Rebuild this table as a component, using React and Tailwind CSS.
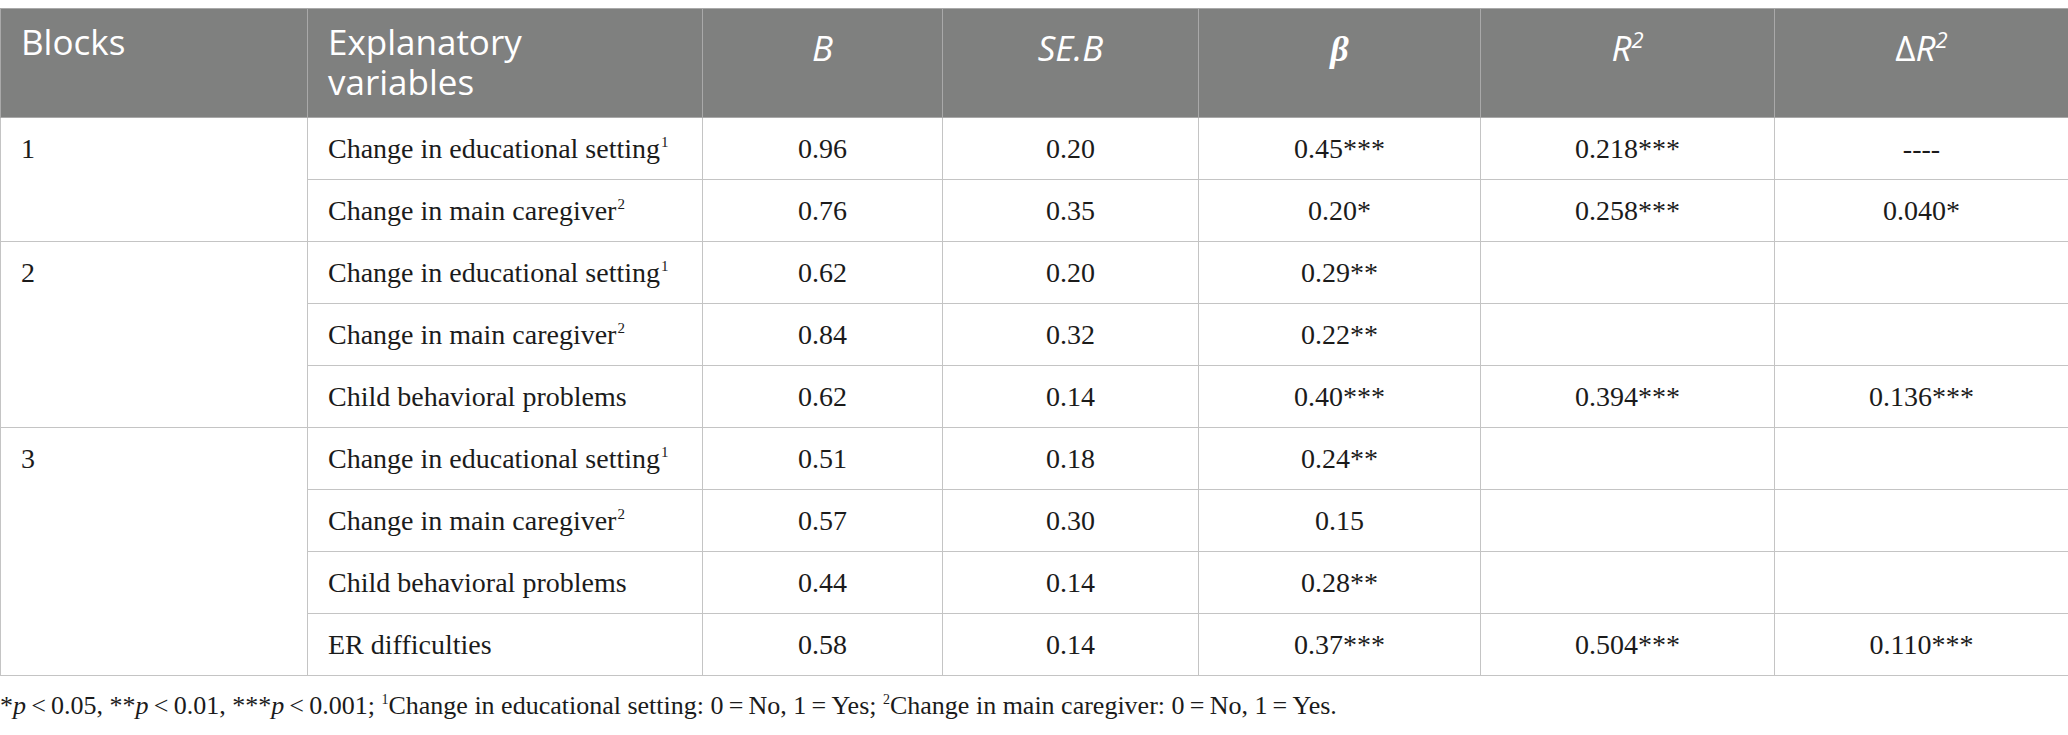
import React from 'react';

const rows = [
    { block: '1', span: 2, label: 'Change in educational setting', sup: '1', b: '0.96', se: '0.20', beta: '0.45***', r2: '0.218***', dr2: '----' },
    { label: 'Change in main caregiver', sup: '2', b: '0.76', se: '0.35', beta: '0.20*', r2: '0.258***', dr2: '0.040*' },
    { block: '2', span: 3, label: 'Change in educational setting', sup: '1', b: '0.62', se: '0.20', beta: '0.29**', r2: '', dr2: '' },
    { label: 'Change in main caregiver', sup: '2', b: '0.84', se: '0.32', beta: '0.22**', r2: '', dr2: '' },
    { label: 'Child behavioral problems', b: '0.62', se: '0.14', beta: '0.40***', r2: '0.394***', dr2: '0.136***' },
    { block: '3', span: 4, label: 'Change in educational setting', sup: '1', b: '0.51', se: '0.18', beta: '0.24**', r2: '', dr2: '' },
    { label: 'Change in main caregiver', sup: '2', b: '0.57', se: '0.30', beta: '0.15', r2: '', dr2: '' },
    { label: 'Child behavioral problems', b: '0.44', se: '0.14', beta: '0.28**', r2: '', dr2: '' },
    { label: 'ER difficulties', b: '0.58', se: '0.14', beta: '0.37***', r2: '0.504***', dr2: '0.110***' },
];

const th = 'border border-[#a9a9a9] align-top pb-0 px-5 font-normal leading-[40px]';
const td = 'border border-[#c4c4c4] h-[62px] px-5 align-middle text-center';

const App = () => {
    return (
        <div className="w-[2068px] bg-white pt-2 text-[#1b1b1b]">
            <table className="w-[2068px] table-fixed border-collapse">
                <colgroup>
                    <col className="w-[307px]" />
                    <col className="w-[395px]" />
                    <col className="w-[240px]" />
                    <col className="w-[256px]" />
                    <col className="w-[282px]" />
                    <col className="w-[294px]" />
                    <col className="w-[294px]" />
                </colgroup>
                <thead>
                    <tr className="h-[109px] bg-[#7f807f] text-white text-[35px] font-['Open_Sans',sans-serif]">
                        <th className={`${th} pt-[13px] text-left`}>Blocks</th>
                        <th className={`${th} pt-[13px] text-left`}>Explanatory<br />variables</th>
                        <th className={`${th} pt-[19px] text-center italic`}>B</th>
                        <th className={`${th} pt-[19px] text-center italic`}>SE.B</th>
                        <th className={`${th} pt-[19px] text-center`}>
                            <span className="font-['Liberation_Serif',serif] italic font-bold text-[36px]">β</span>
                        </th>
                        <th className={`${th} pt-[19px] text-center italic`}>
                            R<sup className="text-[22px] -top-[13px]">2</sup>
                        </th>
                        <th className={`${th} pt-[19px] text-center`}>
                            Δ<span className="italic">R<sup className="text-[22px] -top-[13px]">2</sup></span>
                        </th>
                    </tr>
                </thead>
                <tbody className="font-['Liberation_Serif',serif] text-[28px] leading-[34px]">
                    {rows.map((r, i) => (
                        <tr key={i}>
                            {r.block && (
                                <td rowSpan={r.span} className="border border-[#c4c4c4] px-5 pt-[14px] align-top text-left">
                                    {r.block}
                                </td>
                            )}
                            <td className={`${td} text-left`}>
                                {r.label}
                                {r.sup && <sup className="text-[15px] -top-[11px] ml-[1px]">{r.sup}</sup>}
                            </td>
                            <td className={td}>{r.b}</td>
                            <td className={td}>{r.se}</td>
                            <td className={td}>{r.beta}</td>
                            <td className={td}>{r.r2}</td>
                            <td className={td}>{r.dr2}</td>
                        </tr>
                    ))}
                </tbody>
            </table>
            <p className="mt-[15px] font-['Liberation_Serif',serif] text-[26px] leading-[30px] text-[#1b1b1b]">
                *<i>p</i>{'\u2009<\u20090.05, **'}<i>p</i>{'\u2009<\u20090.01, ***'}<i>p</i>{'\u2009<\u20090.001; '}
                <sup className="text-[14px] -top-[10px]">1</sup>Change in educational setting: 0{'\u2009=\u2009'}No, 1{'\u2009=\u2009'}Yes;{' '}
                <sup className="text-[14px] -top-[10px]">2</sup>Change in main caregiver: 0{'\u2009=\u2009'}No, 1{'\u2009=\u2009'}Yes.
            </p>
        </div>
    );
};

export default App;
